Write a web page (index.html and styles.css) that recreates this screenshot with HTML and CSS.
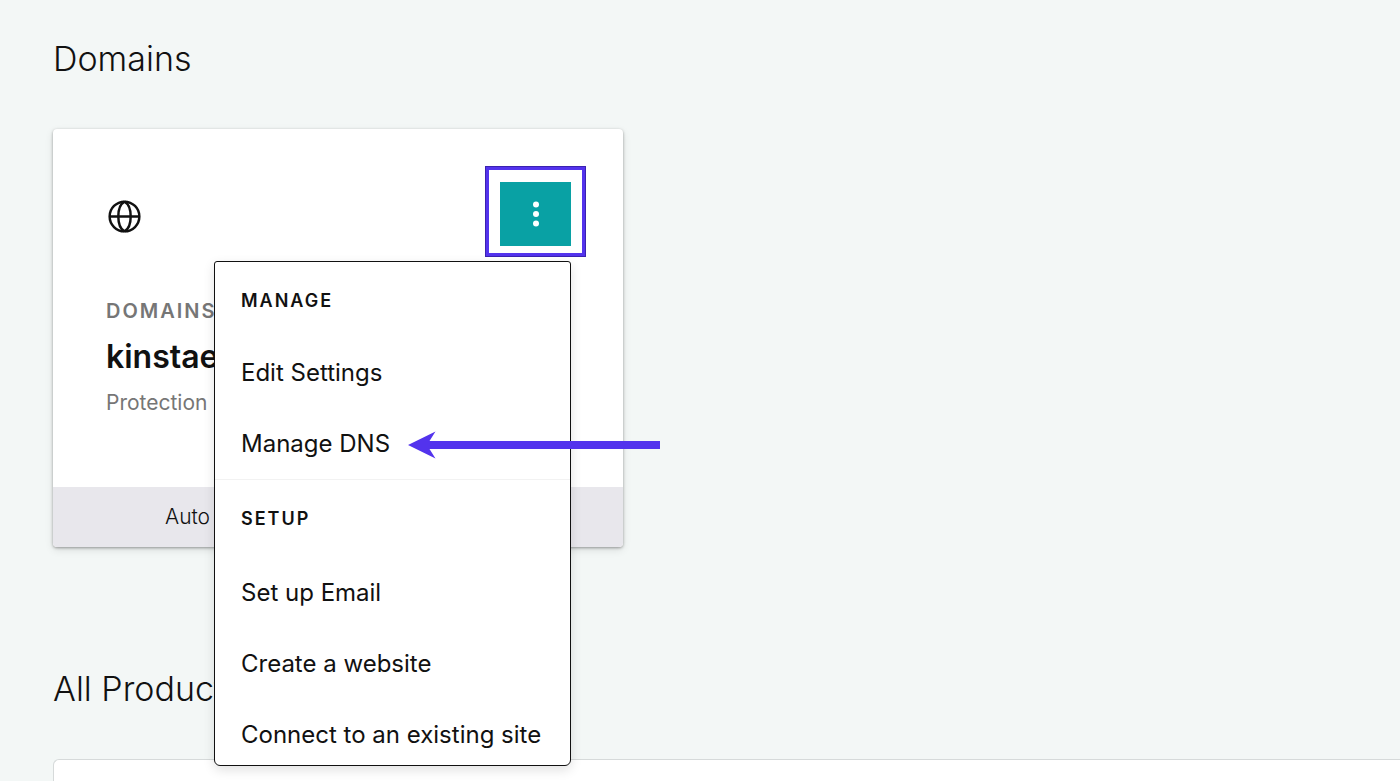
FILE: index.html
```html
<!DOCTYPE html>
<html lang="en">
<head>
<meta charset="utf-8">
<meta name="viewport" content="width=device-width, initial-scale=1">
<title>Domains</title>
<link rel="stylesheet" href="styles.css">
</head>
<body>
<main class="page">
  <section class="section">
    <h1 class="section-title">Domains</h1>
    <article class="card">
      <div class="card-body">
        <div class="card-top">
          <svg class="globe" viewBox="0 0 32 32" fill="none" stroke="currentColor" stroke-width="2.400" aria-hidden="true">
            <circle cx="16" cy="16" r="14.400"/>
            <path d="M1.500 16h29M16 1.600c-4 2.200-6 8-6 14.400s2 12.200 6 14.400M16 1.600c4 2.200 6 8 6 14.400s-2 12.200-6 14.400"/>
          </svg>
          <div class="highlight">
            <button class="more" type="button" aria-label="More options" aria-expanded="true" aria-controls="domain-menu">
              <svg class="dots" viewBox="0 0 8 28" fill="currentColor" aria-hidden="true">
                <circle cx="4" cy="4.500" r="3"/><circle cx="4" cy="14" r="3"/><circle cx="4" cy="23.500" r="3"/>
              </svg>
            </button>
          </div>
        </div>
        <p class="eyebrow">Domains</p>
        <h2 class="domain">kinstae</h2>
        <p class="detail">Protection</p>
      </div>
      <footer class="card-footer">Auto</footer>
      <nav class="menu" id="domain-menu" aria-label="Domain options">
        <div class="menu-group">
          <h3 class="menu-title">Manage</h3>
          <a class="menu-item" href="#settings">Edit Settings</a>
          <a class="menu-item" href="#dns">Manage DNS
            <svg class="arrow" viewBox="0 0 252 28" fill="#5333ed" aria-hidden="true">
              <path d="M0 14 27.500 .5 21.500 10H252v8H21.500l6 9.500z"/>
            </svg>
          </a>
        </div>
        <div class="menu-group">
          <h3 class="menu-title">Setup</h3>
          <a class="menu-item" href="#email">Set up Email</a>
          <a class="menu-item" href="#website">Create a website</a>
          <a class="menu-item" href="#connect">Connect to an existing site</a>
        </div>
      </nav>
    </article>
  </section>
  <section class="section section-products">
    <h1 class="section-title">All Products</h1>
    <div class="products"></div>
  </section>
</main>
</body>
</html>
```
FILE: styles.css
```css
* { box-sizing: border-box; }

body {
  margin: 0;
  background: #f3f7f6;
  color: #111;
  font-family: Inter, "Liberation Sans", sans-serif;
}

h1, h2, h3, p { margin: 0; }

.page {
  display: flex;
  flex-direction: column;
  gap: 122px;
  min-height: 100vh;
  padding: 39px 0 0 53px;
}

.section {
  display: flex;
  flex-direction: column;
  gap: 50px;
}

.section-products { flex: 1; }

.section-title {
  font-size: 34px;
  font-weight: 300;
  line-height: 40px;
}

.card {
  position: relative;
  width: 570px;
  max-width: 100%;
  border-radius: 4px;
  background: #fff;
  box-shadow: 0 1px 3px rgba(0, 0, 0, .35), 0 3px 8px rgba(0, 0, 0, .1);
}

.card-body { padding: 37px 37px 68px 53px; }

.card-top {
  display: flex;
  align-items: flex-start;
  justify-content: space-between;
  margin-bottom: 38px;
}

.globe {
  width: 33px;
  height: 33px;
  margin: 34px 0 0 2px;
}

.highlight {
  padding: 12px 11px 7px;
  border: 4px solid #5333ed;
  outline: 1px solid #3a22b0;
  outline-offset: -1px;
}

.more {
  display: flex;
  align-items: center;
  justify-content: center;
  width: 71px;
  height: 64px;
  padding: 0;
  border: 0;
  background: #09a1a4;
  color: #fff;
}

.dots {
  width: 8px;
  height: 28px;
}

.eyebrow {
  color: #767676;
  font-size: 20px;
  font-weight: 600;
  letter-spacing: 2px;
  line-height: 32px;
  text-transform: uppercase;
}

.domain {
  font-size: 32px;
  font-weight: 600;
  line-height: 60px;
}

.detail {
  color: #767676;
  font-size: 21px;
  line-height: 32px;
}

.card-footer {
  padding: 14px 112px;
  border-radius: 0 0 4px 4px;
  background: #e8e7ec;
  font-size: 21px;
  font-weight: 300;
  line-height: 32px;
}

.menu {
  position: absolute;
  top: 132px;
  right: 52px;
  width: 357px;
  border: 1px solid #111;
  border-radius: 3px 3px 6px 6px;
  background: #fff;
  box-shadow: 0 4px 12px rgba(0, 0, 0, .12);
}

.menu-group + .menu-group { border-top: 1px solid #f2f2f2; }

.menu-title {
  padding: 23px 26px 20px;
  font-size: 18px;
  font-weight: 600;
  letter-spacing: 2px;
  line-height: 32px;
  text-transform: uppercase;
}

.menu-item {
  position: relative;
  display: block;
  padding: 19px 26px;
  color: inherit;
  font-size: 24px;
  line-height: 33px;
  text-decoration: none;
  white-space: nowrap;
}

.menu-group:last-child .menu-title { padding-bottom: 22px; }

.menu-group:last-child .menu-item:last-child { padding-bottom: 14px; }

.arrow {
  position: absolute;
  top: 23px;
  left: 193px;
  width: 252px;
  height: 28px;
}

.products {
  flex: 1;
  border: 1px solid #d6dada;
  border-width: 1px 0 0 1px;
  border-radius: 6px 0 0 0;
  background: #fff;
}
```
